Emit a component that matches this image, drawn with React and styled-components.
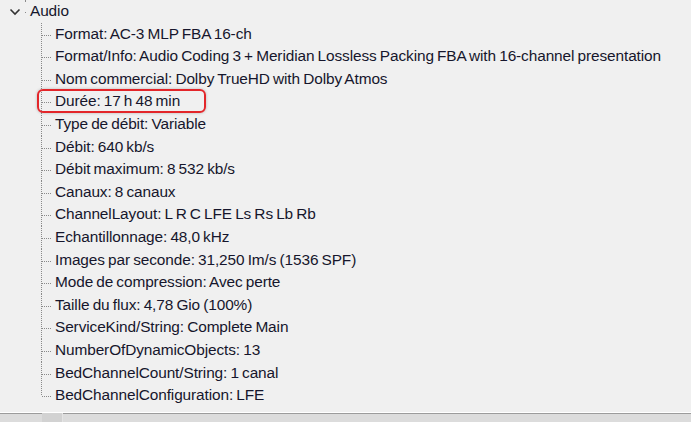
import React from "react";
import styled, { createGlobalStyle } from "styled-components";

const GlobalStyle = createGlobalStyle`
  html, body { margin: 0; padding: 0; background: #f0f0f0; }
  body { font-family: "Liberation Sans", Arial, sans-serif; }
`;

const items = [
  "Format: AC-3 MLP FBA 16-ch",
  "Format/Info: Audio Coding 3 + Meridian Lossless Packing FBA with 16-channel presentation",
  "Nom commercial: Dolby TrueHD with Dolby Atmos",
  "Durée: 17 h 48 min",
  "Type de débit: Variable",
  "Débit: 640 kb/s",
  "Débit maximum: 8 532 kb/s",
  "Canaux: 8 canaux",
  "ChannelLayout: L R C LFE Ls Rs Lb Rb",
  "Echantillonnage: 48,0 kHz",
  "Images par seconde: 31,250 Im/s (1536 SPF)",
  "Mode de compression: Avec perte",
  "Taille du flux: 4,78 Gio (100%)",
  "ServiceKind/String: Complete Main",
  "NumberOfDynamicObjects: 13",
  "BedChannelCount/String: 1 canal",
  "BedChannelConfiguration: LFE",
];

const dots = "repeating-linear-gradient(%DIR%, #8a8a8a 0 1px, transparent 1px 2px)";

function Chevron() {
  return (
    <svg width="12" height="8" viewBox="0 0 12 8">
      <path d="M1.5 1.5 L6 6 L10.5 1.5" fill="none" stroke="#333" strokeWidth="1.6" />
    </svg>
  );
}

export default function App() {
  return (
    <>
      <GlobalStyle />
      <Window>
        <Tree>
          <ParentRow>
            <Toggle>
              <Chevron />
            </Toggle>
            <Stub />
            <Label>Audio</Label>
          </ParentRow>
          <Children>
            {items.map((text, i) => (
              <Item key={text} $last={i === items.length - 1}>
                <Label>{text}</Label>
                {text.startsWith("Durée") && <Highlight />}
              </Item>
            ))}
          </Children>
        </Tree>
        <StatusBar>
          <StatusCell />
        </StatusBar>
      </Window>
    </>
  );
}

const Window = styled.div`
  width: 691px;
  height: 422px;
  display: flex;
  flex-direction: column;
  background: #f0f0f0;
  overflow: hidden;
`;

const Tree = styled.div`
  height: 412px;
  color: #16162c;
  font-size: 15.4px;
  letter-spacing: -0.1px;
  word-spacing: -1px;
`;

const ParentRow = styled.div`
  height: 22.6px;
  display: flex;
  align-items: center;
  position: relative;
  &::before {
    content: "";
    position: absolute;
    left: 25px;
    top: 0;
    width: 1px;
    height: 2px;
    background: #8a8a8a;
  }
`;

const Toggle = styled.span`
  width: 12px;
  height: 8px;
  display: flex;
  margin-left: 9px;
  margin-top: 2px;
`;

const Stub = styled.span`
  width: 1px;
  height: 1px;
  background: #8a8a8a;
  margin: 3px 4px 0 4px;
`;

const Label = styled.span`
  white-space: nowrap;
  line-height: 22.6px;
`;

const Children = styled.div`
  padding-left: 41px;
`;

const Item = styled.div`
  position: relative;
  height: 22.6px;
  display: flex;
  align-items: center;
  padding-left: 14px;
  &::before {
    content: "";
    position: absolute;
    left: 0;
    top: 0;
    width: 1px;
    height: ${(p) => (p.$last ? "12px" : "100%")};
    background: ${dots.replace("%DIR%", "to bottom")};
  }
  &::after {
    content: "";
    position: absolute;
    left: 1px;
    top: 12px;
    width: 10px;
    height: 1px;
    background: ${dots.replace("%DIR%", "to right")};
  }
`;

const Highlight = styled.span`
  position: absolute;
  left: -4px;
  top: -1px;
  width: 165px;
  height: 20px;
  border: 2px solid #e3262a;
  border-radius: 6px;
  box-shadow: 0 0 3px rgba(0, 0, 0, 0.25);
  pointer-events: none;
`;

const StatusBar = styled.div`
  flex: 1;
  display: flex;
  border-top: 1px solid #ffffff;
  box-shadow: inset 0 1px 0 #9c9c9c;
  background: #dcdcdc;
  padding-left: 42px;
`;

const StatusCell = styled.div`
  width: 20px;
  background: #d2d2d2;
  border-right: 1px solid #e4e4e4;
`;
